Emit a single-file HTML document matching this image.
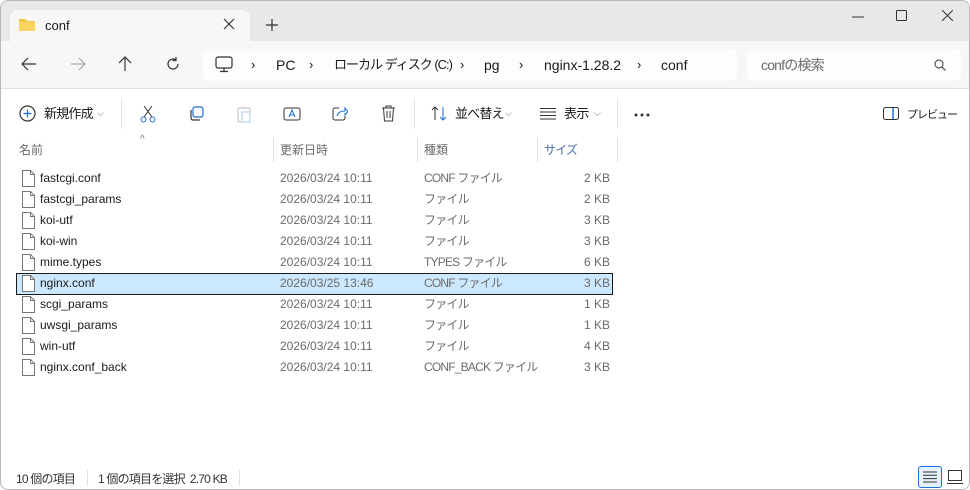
<!DOCTYPE html>
<html><head><meta charset="utf-8"><style>
*{margin:0;padding:0;box-sizing:border-box}
body{width:970px;height:490px;background:#fff;font-family:"Liberation Sans","Noto Sans CJK JP",sans-serif;position:relative;overflow:hidden;color:#1a1a1a}
.win{position:absolute;left:0;top:0;width:970px;height:490px;border:1px solid #b8b8b8;border-radius:8px;overflow:hidden;background:#fff}
.title{position:absolute;left:0;top:0;width:970px;height:40px;background:#e8e8e8}
.tab{position:absolute;left:9px;top:9px;width:240px;height:32px;background:#f7f7f7;border-radius:8px 8px 0 0}
.nav{position:absolute;left:0;top:40px;width:970px;height:48px;background:#f7f7f7;border-bottom:1px solid #e0e0e0}
.addr{position:absolute;left:202px;top:8px;width:534px;height:32px;background:#fdfdfd;border-radius:5px}
.search{position:absolute;left:746px;top:8px;width:214px;height:32px;background:#fdfdfd;border-radius:5px}
.t{position:absolute;white-space:nowrap;font-size:13px;line-height:16px}
.s{font-size:12px}
.j{letter-spacing:-0.8px}
.g{color:#6b6b6b}
svg{position:absolute}
.sep{position:absolute;width:1px;background:#e2e2e2}
.sel{position:absolute;left:15px;top:272px;width:597px;height:22px;background:#cce8ff;border:1px solid #1a1a1a}
</style></head><body><div class="win">
<div class="title"></div>
<div class="tab"></div>
<svg style="left:17px;top:16px" width="18" height="15"><path d="M1 2h6l2 2h8v10H1z" fill="#f4c542"/><path d="M1 5h16v9H1z" fill="#fcd35c"/></svg>
<div class="t" style="left:44px;top:17px">conf</div>
<svg style="left:222px;top:17px" width="12" height="12"><path d="M1 1l10 10M11 1L1 11" stroke="#333" stroke-width="1.2"/></svg>
<svg style="left:265px;top:18px" width="12" height="12"><path d="M6 0v12M0 6h12" stroke="#333" stroke-width="1.2"/></svg>
<svg style="left:851px;top:15px" width="12" height="2"><path d="M0 1h12" stroke="#333"/></svg>
<svg style="left:895px;top:9px" width="11" height="11"><rect x=".5" y=".5" width="10" height="10" rx="1" fill="none" stroke="#333"/></svg>
<svg style="left:941px;top:9px" width="11" height="11"><path d="M0 0l11 11M11 0L0 11" stroke="#333"/></svg>
<div class="nav"><div class="addr"></div><div class="search"></div></div>
<svg style="left:20px;top:56px" width="16" height="14"><path d="M15 7H2M7 1L1 7l6 6" fill="none" stroke="#333" stroke-width="1.2"/></svg>
<svg style="left:69px;top:56px" width="16" height="14"><path d="M1 7h13M9 1l6 6-6 6" fill="none" stroke="#aaa" stroke-width="1.2"/></svg>
<svg style="left:117px;top:55px" width="14" height="16"><path d="M7 15V2M1 7l6-6 6 6" fill="none" stroke="#333" stroke-width="1.2"/></svg>
<svg style="left:165px;top:56px" width="14" height="14"><path d="M12 7A5 5 0 1 1 10 3M10 0v3.5h-3.5" fill="none" stroke="#333" stroke-width="1.2"/></svg>
<svg style="left:214px;top:55px" width="18" height="17"><rect x="1" y="1" width="16" height="11" rx="2" fill="none" stroke="#333" stroke-width="1.2"/><path d="M9 12v3M5 15.5h8" stroke="#333" stroke-width="1.2"/></svg>
<div class="t" style="left:250px;top:56px">›</div>
<div class="t" style="left:275px;top:56px;font-size:14px">PC</div>
<div class="t" style="left:308px;top:56px">›</div>
<div class="t j" style="left:333px;top:56px;font-size:13px;letter-spacing:-1px">ローカル ディスク (C:)</div>
<div class="t" style="left:459px;top:56px">›</div>
<div class="t" style="left:483px;top:56px;font-size:14px">pg</div>
<div class="t" style="left:518px;top:56px">›</div>
<div class="t" style="left:543px;top:56px;font-size:14px">nginx-1.28.2</div>
<div class="t" style="left:636px;top:56px">›</div>
<div class="t" style="left:660px;top:56px;font-size:14px">conf</div>
<div class="t g j" style="left:760px;top:56px;font-size:14px">confの検索</div>
<svg style="left:933px;top:58px" width="12" height="12"><circle cx="5" cy="5" r="4" fill="none" stroke="#333"/><path d="M8 8l3.5 3.5" stroke="#333"/></svg>
<!-- toolbar -->
<svg style="left:18px;top:104px" width="17" height="17"><circle cx="8.5" cy="8.5" r="7.5" fill="none" stroke="#333" stroke-width="1.2"/><path d="M8.5 4.5v8M4.5 8.5h8" stroke="#1a6fd0" stroke-width="1.2"/></svg>
<div class="t j" style="left:43px;top:105px">新規作成</div>
<div class="t g" style="left:96px;top:104px;font-size:9px">⌵</div>
<div class="sep" style="left:120px;top:98px;height:30px"></div>
<svg style="left:139px;top:104px" width="16" height="18"><path d="M4 1l8 11M12 1L4 12" stroke="#333"/><circle cx="3.5" cy="14.5" r="2.5" fill="none" stroke="#1a6fd0"/><circle cx="12.5" cy="14.5" r="2.5" fill="none" stroke="#1a6fd0"/></svg>
<svg style="left:188px;top:105px" width="15" height="15"><rect x="4" y="1" width="10" height="10" rx="2" fill="none" stroke="#1a6fd0" stroke-width="1.2"/><path d="M2 4v8a2 2 0 0 0 2 2h7" fill="none" stroke="#333" stroke-width="1.2"/></svg>
<svg style="left:236px;top:104px" width="14" height="18"><rect x="1" y="3" width="12" height="14" rx="1.5" fill="none" stroke="#bbb"/><rect x="5" y="7" width="8" height="10" fill="none" stroke="#a8cdf0"/></svg>
<svg style="left:282px;top:105px" width="18" height="16"><rect x="1" y="2" width="16" height="12" rx="2" fill="none" stroke="#333"/><path d="M6 11l3-7 3 7M7 9h4" stroke="#1a6fd0" fill="none"/></svg>
<svg style="left:331px;top:104px" width="16" height="16"><path d="M7 3H3a2 2 0 0 0-2 2v8a2 2 0 0 0 2 2h8a2 2 0 0 0 2-2v-2" fill="none" stroke="#333"/><path d="M5 11c1-4 4-5 8-5V3l3 3.5-3 3.5V8" fill="none" stroke="#1a6fd0"/></svg>
<svg style="left:380px;top:104px" width="15" height="17"><path d="M1 3h13M5 3V1h5v2M2.5 3l1 13h8l1-13M6 6v7M9 6v7" fill="none" stroke="#333"/></svg>
<div class="sep" style="left:413px;top:98px;height:30px"></div>
<svg style="left:430px;top:105px" width="16" height="15"><path d="M4 14V1M1 4l3-3 3 3" fill="none" stroke="#333"/><path d="M12 1v13M9 11l3 3 3-3" fill="none" stroke="#1a6fd0"/></svg>
<div class="t j" style="left:454px;top:105px">並べ替え</div>
<div class="t g" style="left:504px;top:104px;font-size:9px">⌵</div>
<svg style="left:539px;top:107px" width="16" height="12"><path d="M0 .5h16M0 4h16M0 7.5h16M0 11h16" stroke="#333"/></svg>
<div class="t j" style="left:563px;top:105px">表示</div>
<div class="t g" style="left:593px;top:104px;font-size:9px">⌵</div>
<div class="sep" style="left:616px;top:98px;height:30px"></div>
<svg style="left:633px;top:112px" width="16" height="4"><circle cx="2" cy="2" r="1.5" fill="#333"/><circle cx="8" cy="2" r="1.5" fill="#333"/><circle cx="14" cy="2" r="1.5" fill="#333"/></svg>
<svg style="left:882px;top:106px" width="16" height="13"><rect x=".5" y=".5" width="15" height="12" rx="2" fill="none" stroke="#333"/><path d="M10 1v11" stroke="#1a6fd0" stroke-width="1.5"/></svg>
<div class="t" style="left:906px;top:106px;font-size:11px;letter-spacing:-1px">プレビュー</div>
<!-- headers -->
<div class="t" style="left:139px;top:131px;font-size:10px;color:#777">^</div>
<div class="t s g" style="left:18px;top:141px">名前</div>
<div class="sep" style="left:272px;top:137px;height:24px"></div>
<div class="t s g" style="left:279px;top:141px">更新日時</div>
<div class="sep" style="left:416px;top:137px;height:24px"></div>
<div class="t s g" style="left:423px;top:141px">種類</div>
<div class="sep" style="left:536px;top:137px;height:24px"></div>
<div class="t s j" style="left:543px;top:141px;color:#4a6fa0">サイズ</div>
<div class="sep" style="left:616px;top:137px;height:24px"></div>
<div class="sel"></div>
<div id="rows"></div>
<!-- status -->
<div class="t s j" style="left:15px;top:470px;color:#333">10 個の項目</div>
<div class="sep" style="left:86px;top:469px;height:16px"></div>
<div class="t s j" style="left:97px;top:470px;color:#333">1 個の項目を選択&nbsp; 2.70 KB</div>
<div class="sep" style="left:238px;top:469px;height:16px"></div>
<div style="position:absolute;left:917px;top:465px;width:24px;height:22px;background:#e5f1fb;border:1px solid #1a73d6;border-radius:3px"></div>
<svg style="left:922px;top:470px" width="14" height="12"><path d="M0 1h14M0 4.3h14M0 7.6h14M0 11h14" stroke="#333"/></svg>
<svg style="left:946px;top:468px" width="16" height="16"><rect x="1.5" y="1.5" width="13" height="10" fill="none" stroke="#333"/><path d="M0 14.5h16" stroke="#333"/></svg>
</div>
<script>
var d=[["fastcgi.conf","2026/03/24 10:11","CONF ファイル","2 KB"],["fastcgi_params","2026/03/24 10:11","ファイル","2 KB"],["koi-utf","2026/03/24 10:11","ファイル","3 KB"],["koi-win","2026/03/24 10:11","ファイル","3 KB"],["mime.types","2026/03/24 10:11","TYPES ファイル","6 KB"],["nginx.conf","2026/03/25 13:46","CONF ファイル","3 KB"],["scgi_params","2026/03/24 10:11","ファイル","1 KB"],["uwsgi_params","2026/03/24 10:11","ファイル","1 KB"],["win-utf","2026/03/24 10:11","ファイル","4 KB"],["nginx.conf_back","2026/03/24 10:11","CONF_BACK ファイル","3 KB"]];
var h="";d.forEach(function(r,i){var y=169+i*21;
h+='<svg style="left:21px;top:'+(y)+'px" width="13" height="17"><path d="M.5 .5h8l4 4v12H.5z" fill="#fff" stroke="#777"/><path d="M8.5 .5v4h4" fill="none" stroke="#777"/></svg>';
h+='<div class="t s" style="left:39px;top:'+y+'px;color:#1a1a1a">'+r[0]+'</div>';
h+='<div class="t s g" style="left:279px;top:'+y+'px">'+r[1]+'</div>';
h+='<div class="t s g j" style="left:423px;top:'+y+'px">'+r[2]+'</div>';
h+='<div class="t s g" style="left:560px;width:49px;text-align:right;top:'+y+'px">'+r[3]+'</div>';});
document.getElementById("rows").innerHTML=h;
</script>
</body></html>
